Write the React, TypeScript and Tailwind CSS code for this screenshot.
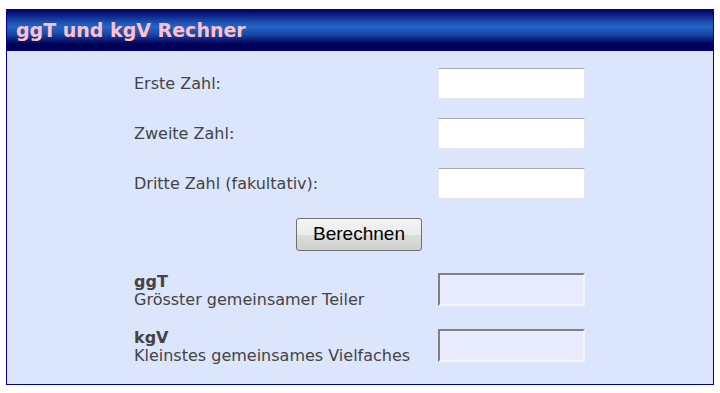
import React from "react";

const font = { fontFamily: '"DejaVu Sans", Verdana, sans-serif' };

function Row({ label }: { label: string }) {
  return (
    <div className="flex items-center h-[31px]">
      <div className="w-[304px] text-[16px] text-[#444444]">{label}</div>
      <input
        type="text"
        className="w-[147px] h-[31px] bg-white border border-[#e4e8ee] border-t-[#a9a9a9] outline-none"
      />
    </div>
  );
}

function Result({ title, sub }: { title: string; sub: string }) {
  return (
    <div className="flex items-center h-[33px]">
      <div className="w-[304px] text-[16px] leading-[18px] text-[#444444] pt-[2px]">
        <div className="font-bold">{title}</div>
        <div>{sub}</div>
      </div>
      <div className="w-[147px] h-[33px] bg-[#e8eafd] border-2 border-t-[#808080] border-l-[#808080] border-r-[#f4f4f4] border-b-[#f4f4f4]" />
    </div>
  );
}

export default function App() {
  return (
    <div className="w-[720px] h-[393px] bg-white pt-[9px] pl-[6px]" style={font}>
      <div className="w-[708px] h-[376px] border border-[#00008b] bg-[#dbe5fb] flex flex-col">
        <div className="h-[41px] bg-[linear-gradient(to_bottom,#000066_0%,#1b4fb0_30%,#2664c8_42%,#1a4aa6_60%,#000058_85%,#000050_100%)] border-b border-[#000080] flex items-center pl-[9px]">
          <span className="text-[19px] font-bold text-[#ffc0cb]">ggT und kgV Rechner</span>
        </div>
        <div className="flex flex-col pt-[17px] pl-[127px]">
          <div className="flex flex-col gap-[19px]">
            <Row label="Erste Zahl:" />
            <Row label="Zweite Zahl:" />
            <Row label="Dritte Zahl (fakultativ):" />
          </div>
          <div className="mt-[19px] ml-[162px]">
            <button
              className="w-[126px] h-[33px] rounded-[3px] border border-[#707070] bg-[linear-gradient(to_bottom,#f4f4f4_0%,#ebebeb_50%,#dddddd_51%,#cfcfcf_100%)] text-[19px] text-black"
              style={{ fontFamily: '"Liberation Sans", Arial, sans-serif' }}
            >
              Berechnen
            </button>
          </div>
          <div className="mt-[22px] flex flex-col gap-[23px]">
            <Result title="ggT" sub="Grösster gemeinsamer Teiler" />
            <Result title="kgV" sub="Kleinstes gemeinsames Vielfaches" />
          </div>
        </div>
      </div>
    </div>
  );
}
